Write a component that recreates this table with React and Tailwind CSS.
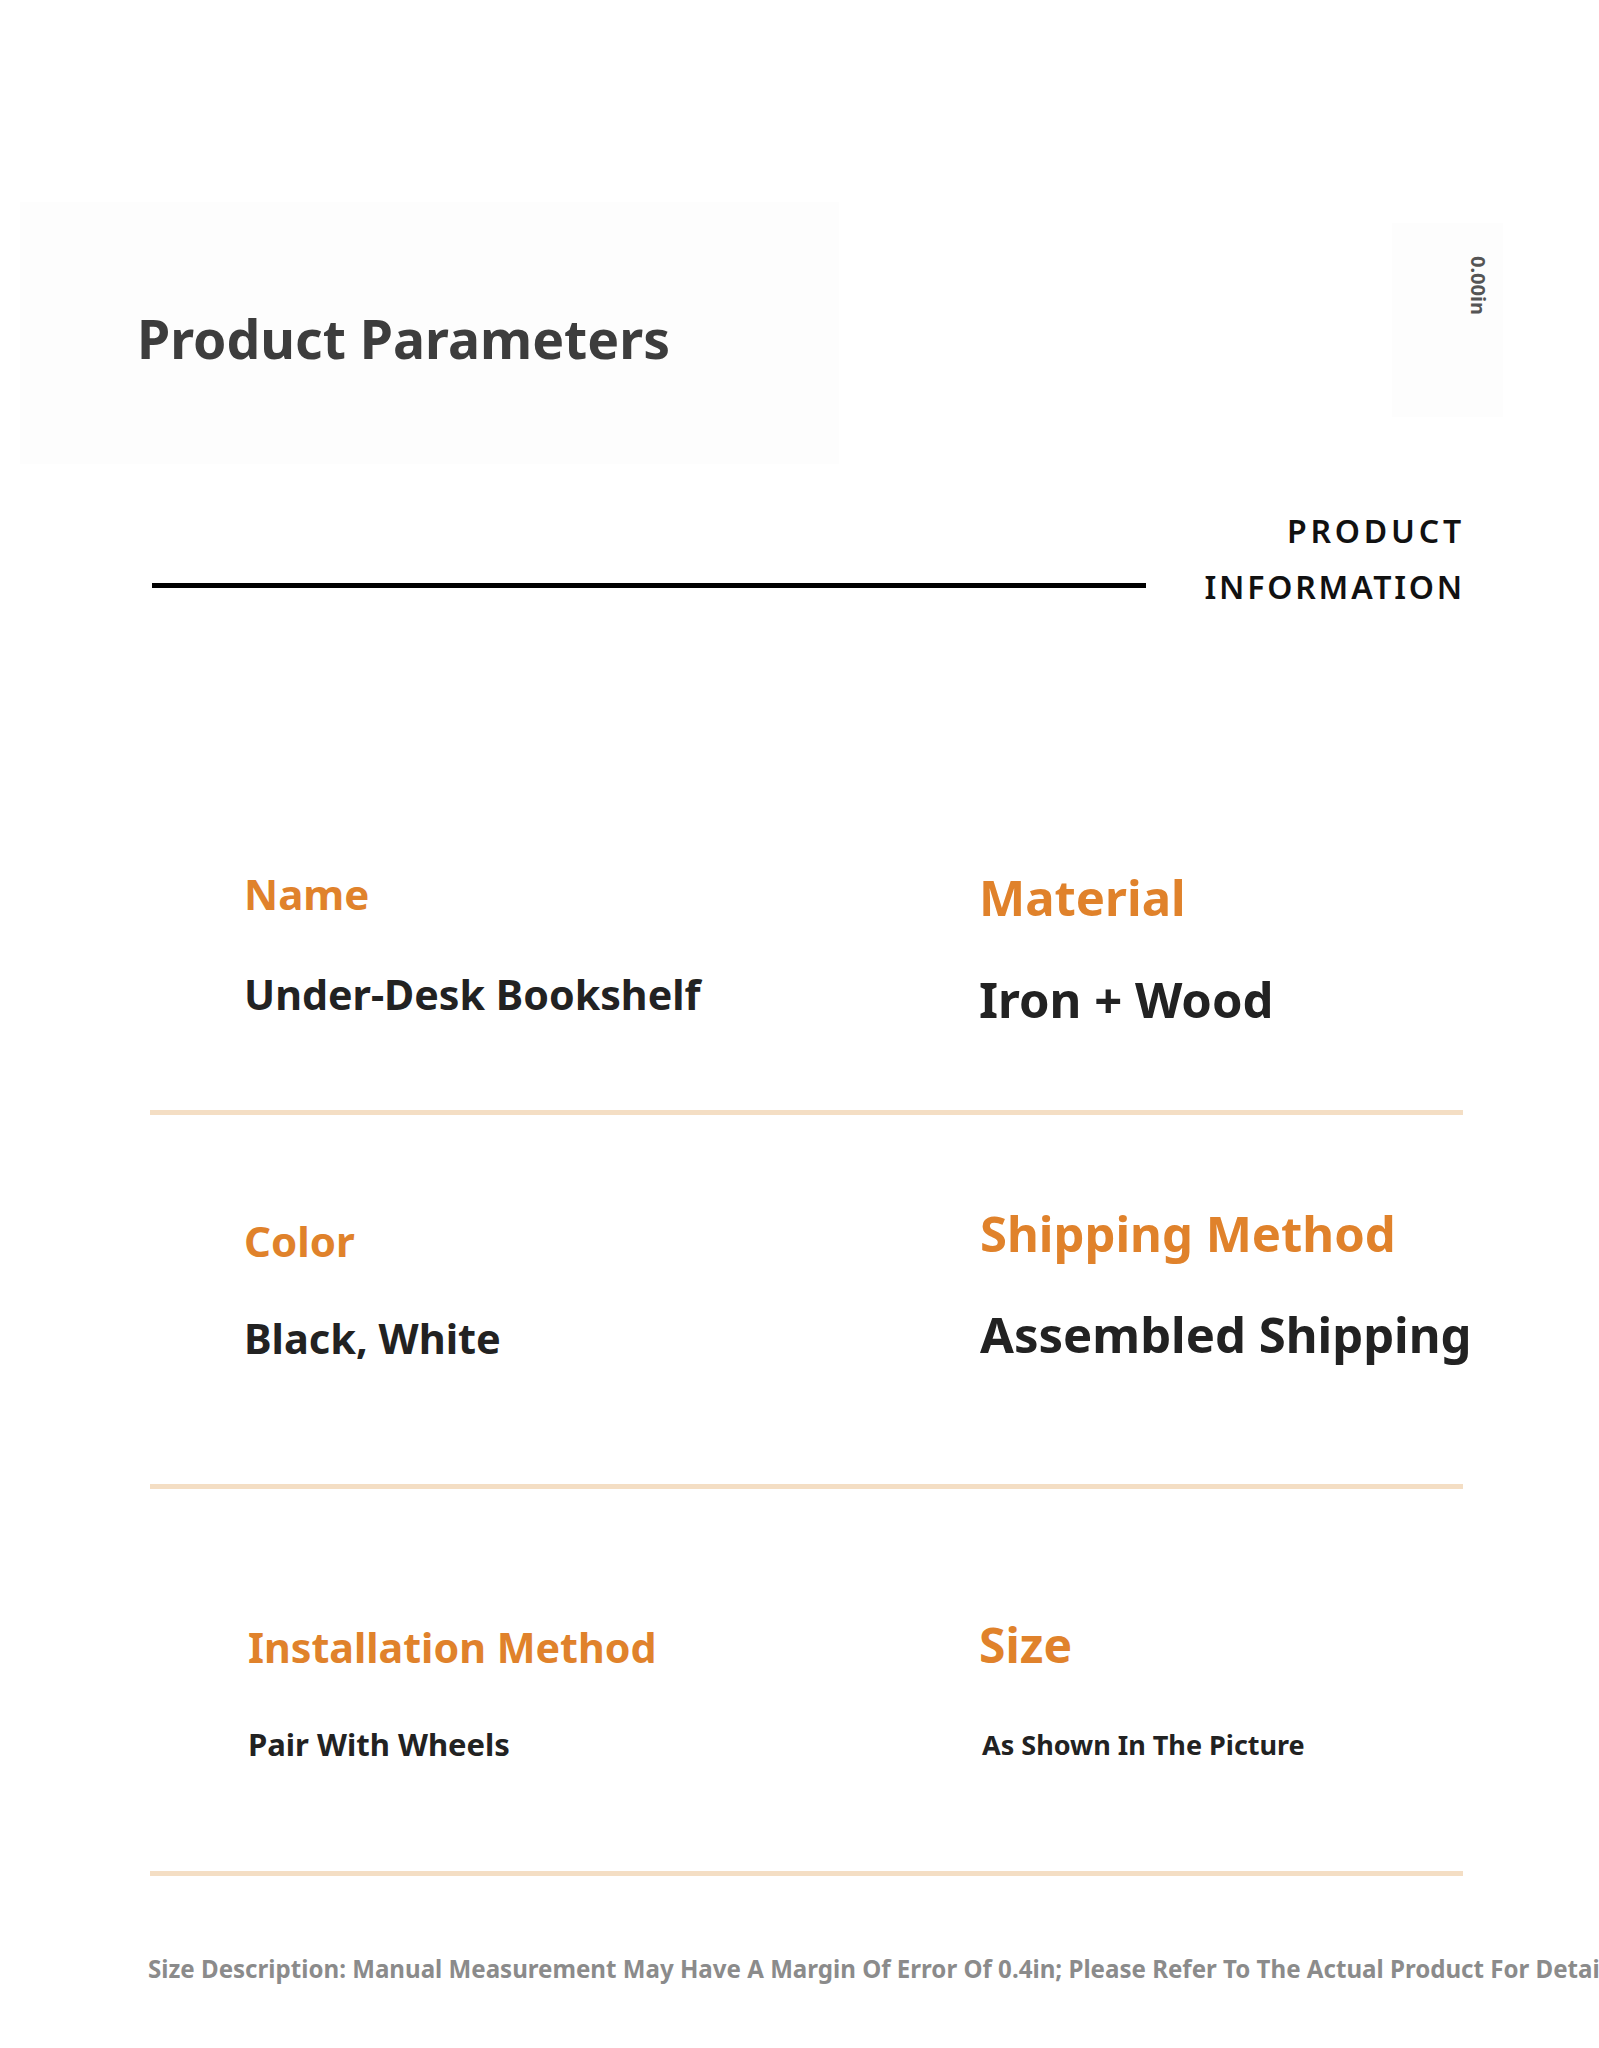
export default function App() {
  return (
    <div className="w-[1599px] h-[2048px] bg-white overflow-hidden font-['Noto_Sans',sans-serif]">
      {/* header */}
      <div className="flex items-start pt-[202px] pl-[20px]">
        <div className="w-[819px] h-[262px] bg-[#fdfdfd] pt-[110px] pl-[117px]">
          <h1 className="text-[53.5px] leading-none font-bold text-[#3d3d3d] whitespace-nowrap">
            Product Parameters
          </h1>
        </div>
        <div className="ml-[553px] mt-[21px] w-[111px] h-[194px] bg-[#fdfdfd] pt-[33px] pl-[76px]">
          <span className="[writing-mode:vertical-rl] text-[20px] leading-none font-bold text-[#555]">0.00in</span>
        </div>
      </div>

      {/* product information */}
      <div className="flex items-start mt-[39px] pl-[152px] pr-[134px]">
        <div className="w-[994px] h-[5px] bg-black mt-[80px]" />
        <div className="ml-auto text-right text-[32px] leading-[56px] font-semibold text-[#111]">
          <div className="tracking-[3.8px]">PRODUCT</div>
          <div className="tracking-[2.8px]">INFORMATION</div>
        </div>
      </div>

      {/* parameters */}
      <div className="mt-[258px] pl-[150px] pr-[136px]">
        <div className="grid grid-cols-[735px_1fr] h-[237px] pl-[94px]">
          <div className="flex flex-col">
            <span className="text-[42px] leading-none font-bold text-[#e0822b]">Name</span>
            <span className="mt-[59px] text-[41.2px] leading-none font-bold text-[#222]">Under-Desk Bookshelf</span>
          </div>
          <div className="flex flex-col">
            <span className="text-[49px] leading-none font-bold text-[#e0822b]">Material</span>
            <span className="mt-[53px] text-[49px] leading-none font-bold text-[#222]">Iron + Wood</span>
          </div>
        </div>
        <div className="h-[5px] bg-[#f4dec4]" />

        <div className="grid grid-cols-[735px_1fr] h-[369px] pl-[94px]">
          <div className="flex flex-col pt-[105px]">
            <span className="text-[42px] leading-none font-bold text-[#e0822b]">Color</span>
            <span className="mt-[56px] text-[41.5px] leading-none font-bold text-[#222]">Black, White</span>
          </div>
          <div className="flex flex-col pt-[94px] pl-[1px]">
            <span className="text-[49px] leading-none font-bold text-[#e0822b] whitespace-nowrap">Shipping Method</span>
            <span className="mt-[52px] text-[49px] leading-none font-bold text-[#222] whitespace-nowrap">Assembled Shipping</span>
          </div>
        </div>
        <div className="h-[5px] bg-[#f4dec4]" />

        <div className="grid grid-cols-[735px_1fr] h-[382px] pl-[94px]">
          <div className="flex flex-col pt-[138px] pl-[4px]">
            <span className="text-[41.2px] leading-none font-bold text-[#e0822b]">Installation Method</span>
            <span className="mt-[61px] text-[31px] leading-none font-bold text-[#222]">Pair With Wheels</span>
          </div>
          <div className="flex flex-col pt-[132px]">
            <span className="text-[48px] leading-none font-bold text-[#e0822b]">Size</span>
            <span className="mt-[62px] ml-[3px] text-[27px] leading-none font-bold text-[#222]">As Shown In The Picture</span>
          </div>
        </div>
        <div className="h-[5px] bg-[#f4dec4]" />
      </div>

      {/* note */}
      <p className="mt-[81px] pl-[148px] whitespace-nowrap text-[24.1px] leading-none font-bold text-[#8b8b8b]">
        Size Description: Manual Measurement May Have A Margin Of Error Of 0.4in; Please Refer To The Actual Product For Details
      </p>
    </div>
  );
}
